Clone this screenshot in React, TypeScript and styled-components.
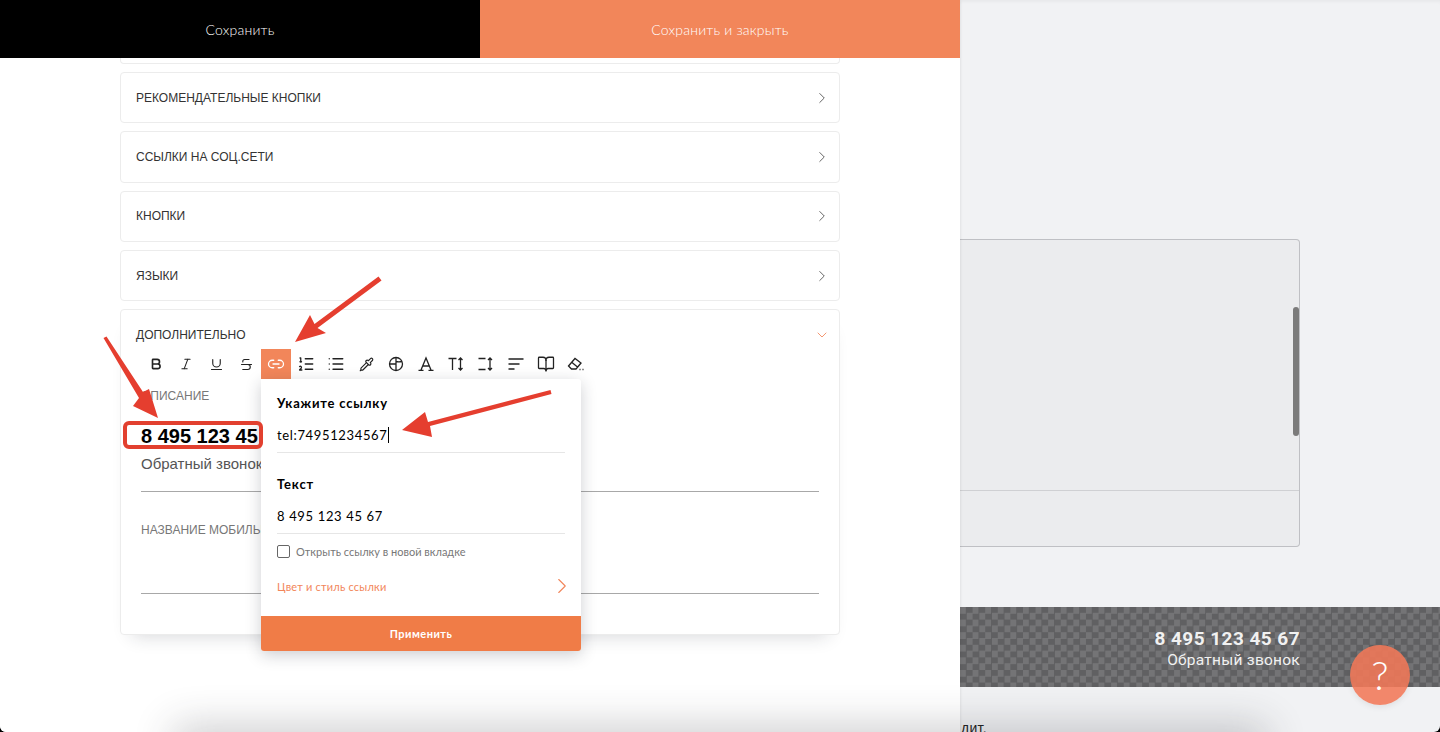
import React from "react"
import styled, { createGlobalStyle } from "styled-components"
import {
  Bold,
  BookOpen,
  ChevronDown,
  ChevronRight,
  Italic,
  Link2,
  List,
  ListOrdered,
  Pipette,
  Strikethrough,
  Underline,
} from "lucide-react"

const GlobalStyle = createGlobalStyle`
  html, body {
    margin: 0;
    padding: 0;
    background: #000;
  }
  * {
    box-sizing: border-box;
  }
`

const Page = styled.div`
  position: relative;
  display: flex;
  width: 1440px;
  height: 732px;
  overflow: hidden;
  background: #f1f2f4;
  border-radius: 0 0 6px 6px;
  font-family: "Liberation Sans", Arial, sans-serif;
`

const Editor = styled.div`
  width: 960px;
  flex-shrink: 0;
  height: 100%;
  background: #fff;
  box-shadow: 0 0 3px rgba(0, 0, 0, 0.12);
  position: relative;
  z-index: 1;
`

const SaveBar = styled.div`
  display: flex;
  height: 58px;
`

const SaveButton = styled.button<{ $primary?: boolean }>`
  flex: 1;
  border: none;
  background: ${(props) => (props.$primary ? "#f2865a" : "#000")};
  color: #fff;
  font-family: "Lato", "Open Sans", sans-serif;
  font-size: 14px;
  font-weight: 300;
  letter-spacing: 0.2px;
`

const Sections = styled.div`
  display: flex;
  flex-direction: column;
  gap: 8px;
  padding: 0 120px;
`

const SectionStub = styled.div`
  height: 6px;
  border: 1px solid #ececec;
  border-top: none;
  border-radius: 0 0 4px 4px;
`

const SectionRow = styled.div`
  display: flex;
  align-items: center;
  justify-content: space-between;
  height: 51.3px;
  padding: 0 8px 0 15px;
  border: 1px solid #ececec;
  border-radius: 4px;
  color: #333;
  font-size: 12px;

  svg {
    color: #555;
  }
`

const OpenSection = styled.div`
  position: relative;
  height: 326px;
  border: 1px solid #ececec;
  border-radius: 4px;
  background: #fff;
  box-shadow: 0 12px 18px -12px rgba(30, 35, 50, 0.2);
`

const OpenHeader = styled.div`
  display: flex;
  align-items: center;
  justify-content: space-between;
  height: 39px;
  padding: 10px 9px 0 15px;
  color: #333;
  font-size: 12px;

  svg {
    color: #f2865a;
  }
`

const Toolbar = styled.div`
  display: flex;
  margin-left: 20px;
  height: 30px;
`

const ToolButton = styled.div<{ $active?: boolean }>`
  position: relative;
  display: flex;
  align-items: center;
  justify-content: center;
  width: 30px;
  height: 30px;
  background: ${(props) => (props.$active ? "#f2865a" : "transparent")};
  color: ${(props) => (props.$active ? "#fff" : "#222")};
`

const Form = styled.div`
  display: flex;
  flex-direction: column;
  margin: 0 20px;
`

const FieldLabel = styled.div<{ $second?: boolean }>`
  margin-top: ${(props) => (props.$second ? "31px" : "10px")};
  line-height: 15px;
  font-size: 12px;
  color: #777;
  white-space: nowrap;
`

const DescriptionValue = styled.div`
  padding-bottom: 15px;
  margin-top: 20px;
  border-bottom: 1px solid #a8a8a8;
`

const PhoneLine = styled.div`
  position: relative;
  line-height: 24px;
  font-size: 20px;
  font-weight: 700;
  color: #000;
`

const CalloutBox = styled.span`
  position: absolute;
  left: -18px;
  top: -3px;
  width: 140px;
  height: 28px;
  border: 4px solid #e2402f;
  border-radius: 6px;
  z-index: 4;
`

const SubLine = styled.div`
  margin-top: 4px;
  line-height: 24px;
  font-size: 15px;
  color: #555;
`

const EmptyValue = styled.div`
  height: 56px;
  border-bottom: 1px solid #a8a8a8;
`

const Popover = styled.div`
  position: absolute;
  top: 30px;
  left: 0;
  z-index: 3;
  width: 320px;
  height: 272px;
  display: flex;
  flex-direction: column;
  background: #fff;
  border-radius: 0 3px 3px 3px;
  overflow: hidden;
  color: #000;
  font-family: "Lato", "Open Sans", sans-serif;
  box-shadow: 0 4px 16px rgba(30, 35, 50, 0.22);
`

const PopoverBody = styled.div`
  flex: 1;
  padding: 16px 16px 0;
`

const PopoverTitle = styled.div<{ $spaced?: boolean }>`
  margin-top: ${(props) => (props.$spaced ? "23px" : "0")};
  line-height: 17px;
  font-size: 13px;
  font-weight: 700;
  letter-spacing: 0.8px;
`

const PopoverInput = styled.div`
  display: flex;
  align-items: center;
  height: 41px;
  padding-top: 6px;
  border-bottom: 1px solid #e6e6e6;
  font-size: 13px;
  letter-spacing: 0.65px;
`

const Caret = styled.span`
  display: inline-block;
  width: 1px;
  height: 16px;
  background: #000;
`

const CheckRow = styled.label`
  display: flex;
  align-items: center;
  gap: 6px;
  margin-top: 11px;
  font-size: 11px;
  color: #777;
`

const CheckBox = styled.span`
  width: 13px;
  height: 13px;
  border: 1px solid #666;
  border-radius: 2px;
`

const StyleLink = styled.div`
  display: flex;
  align-items: center;
  justify-content: space-between;
  height: 16px;
  margin-top: 20px;
  font-size: 11px;
  letter-spacing: 0.2px;
  color: #f2865a;

  svg {
    margin-right: -10px;
  }
`

const ApplyButton = styled.button`
  height: 35px;
  border: none;
  background: #f07c47;
  color: #fff;
  font-family: inherit;
  font-size: 11px;
  font-weight: 700;
  letter-spacing: 0.5px;
`

const Preview = styled.div`
  flex: 1;
  padding-top: 239px;
  box-shadow: inset 0 4px 4px -3px rgba(0, 0, 0, 0.06);
`

const ScreenBox = styled.div`
  position: relative;
  height: 308px;
  margin-right: 140px;
  padding-bottom: 55px;
  background: #ebecee;
  border: 1px solid #bfc0c4;
  border-left: none;
  border-radius: 0 4px 4px 0;
`

const ScreenDivider = styled.div`
  height: 100%;
  border-bottom: 1px solid #cfd0d3;
`

const ScrollThumb = styled.div`
  position: absolute;
  top: 67px;
  right: 0;
  width: 6px;
  height: 129px;
  border-radius: 3px;
  background: #7b7b7b;
`

const CheckerBar = styled.div`
  display: flex;
  flex-direction: column;
  align-items: flex-end;
  justify-content: center;
  height: 80px;
  margin-top: 60px;
  padding: 4px 140px 0 0;
  background: repeating-conic-gradient(#606062 0 25%, #747476 0 50%) 0 0 / 12.6px 12.6px;
  color: #f1f1f1;
  font-family: "Roboto", sans-serif;
`

const BarPhone = styled.div`
  font-size: 19px;
  font-weight: 700;
  line-height: 22px;
  letter-spacing: 0.45px;
`

const BarSub = styled.div`
  font-size: 15.5px;
  line-height: 20px;
  letter-spacing: 0.25px;
`

const CutText = styled.div`
  margin-top: 33px;
  padding-left: 1px;
  font-size: 14px;
  line-height: 16px;
  letter-spacing: 0.3px;
  color: #222;
`

const FooterShadow = styled.div`
  position: absolute;
  left: 180px;
  right: 180px;
  bottom: -30px;
  height: 30px;
  z-index: 2;
  box-shadow: 0 0 40px 6px rgba(40, 42, 50, 0.24);
`

const HelpButton = styled.button`
  position: absolute;
  right: 30px;
  bottom: 27px;
  z-index: 5;
  width: 60px;
  height: 60px;
  border: none;
  border-radius: 50%;
  background: rgba(241, 120, 88, 0.88);
  color: #fff;
  font-family: "Lato", "Open Sans", sans-serif;
  font-size: 40px;
  font-weight: 300;
  box-shadow: 0 2px 6px rgba(0, 0, 0, 0.08);
`

const Arrows = styled.svg`
  position: absolute;
  inset: 0;
  z-index: 6;
  pointer-events: none;
`

const ToolIcon = ({ children }: { children: React.ReactNode }) => (
  <svg width="18" height="18" viewBox="0 0 18 18" fill="none" stroke="currentColor" strokeWidth="1.3">
    {children}
  </svg>
)

const sections = ["РЕКОМЕНДАТЕЛЬНЫЕ КНОПКИ", "ССЫЛКИ НА СОЦ.СЕТИ", "КНОПКИ", "ЯЗЫКИ"]

export default function App() {
  return (
    <Page>
      <GlobalStyle />
      <Editor>
        <SaveBar>
          <SaveButton>Сохранить</SaveButton>
          <SaveButton $primary>Сохранить и закрыть</SaveButton>
        </SaveBar>
        <Sections>
          <SectionStub />
          {sections.map((title) => (
            <SectionRow key={title}>
              <span>{title}</span>
              <ChevronRight size={18} strokeWidth={1.2} />
            </SectionRow>
          ))}
          <OpenSection>
            <OpenHeader>
              <span>ДОПОЛНИТЕЛЬНО</span>
              <ChevronDown size={16} strokeWidth={1.3} />
            </OpenHeader>
            <Toolbar>
              <ToolButton>
                <Bold size={14} strokeWidth={2.8} />
              </ToolButton>
              <ToolButton>
                <Italic size={14} strokeWidth={1.8} />
              </ToolButton>
              <ToolButton>
                <Underline size={15} strokeWidth={1.8} />
              </ToolButton>
              <ToolButton>
                <Strikethrough size={15} strokeWidth={1.8} />
              </ToolButton>
              <ToolButton $active>
                <Link2 size={18} strokeWidth={1.7} />
                <Popover>
                  <PopoverBody>
                    <PopoverTitle>Укажите ссылку</PopoverTitle>
                    <PopoverInput>
                      tel:74951234567
                      <Caret />
                    </PopoverInput>
                    <PopoverTitle $spaced>Текст</PopoverTitle>
                    <PopoverInput>8 495 123 45 67</PopoverInput>
                    <CheckRow>
                      <CheckBox />
                      Открыть ссылку в новой вкладке
                    </CheckRow>
                    <StyleLink>
                      Цвет и стиль ссылки
                      <ChevronRight size={26} strokeWidth={1} />
                    </StyleLink>
                  </PopoverBody>
                  <ApplyButton>Применить</ApplyButton>
                </Popover>
              </ToolButton>
              <ToolButton>
                <ListOrdered size={18} strokeWidth={1.7} />
              </ToolButton>
              <ToolButton>
                <List size={18} strokeWidth={1.8} />
              </ToolButton>
              <ToolButton>
                <Pipette size={15} strokeWidth={1.8} />
              </ToolButton>
              <ToolButton>
                <ToolIcon>
                  <circle cx="9" cy="9" r="6.5" />
                  <path d="M9 2.5v13M2.5 9H9M9 6.5c2 .5 3.5.5 6 0" />
                </ToolIcon>
              </ToolButton>
              <ToolButton>
                <ToolIcon>
                  <path d="M4 15 9 3l5 12M6 11h6M1.5 15.3h5M11.5 15.3h5" />
                </ToolIcon>
              </ToolButton>
              <ToolButton>
                <ToolIcon>
                  <path d="M1.5 3.5h8M5.5 3.5V15M13.5 3v12M11.5 5l2-2 2 2M11.5 13l2 2 2-2" />
                </ToolIcon>
              </ToolButton>
              <ToolButton>
                <ToolIcon>
                  <path d="M1.5 3.5h7M1.5 14.5h7M13 3v12M11 5l2-2 2 2M11 13l2 2 2-2" />
                </ToolIcon>
              </ToolButton>
              <ToolButton>
                <ToolIcon>
                  <path d="M1.5 4h15M1.5 9h11M1.5 14h6" />
                </ToolIcon>
              </ToolButton>
              <ToolButton>
                <BookOpen size={18} strokeWidth={1.7} />
              </ToolButton>
              <ToolButton>
                <ToolIcon>
                  <path d="M1.5 11 8 3.5l6 4.5-5 6H4.5zM5 7.5l5.5 4.5" />
                  <path d="M12.5 14.5h1M15.5 14.5h1" />
                </ToolIcon>
              </ToolButton>
            </Toolbar>
            <Form>
              <FieldLabel>ОПИСАНИЕ</FieldLabel>
              <DescriptionValue>
                <PhoneLine>
                  8 495 123 45 67
                  <CalloutBox />
                </PhoneLine>
                <SubLine>Обратный звонок</SubLine>
              </DescriptionValue>
              <FieldLabel $second>НАЗВАНИЕ МОБИЛЬНОГО МЕНЮ</FieldLabel>
              <EmptyValue />
            </Form>
          </OpenSection>
        </Sections>
      </Editor>
      <Preview>
        <ScreenBox>
          <ScreenDivider />
          <ScrollThumb />
        </ScreenBox>
        <CheckerBar>
          <BarPhone>8 495 123 45 67</BarPhone>
          <BarSub>Обратный звонок</BarSub>
        </CheckerBar>
        <CutText>дит.</CutText>
      </Preview>
      <FooterShadow />
      <HelpButton>?</HelpButton>
      <Arrows width="1440" height="732" viewBox="0 0 1440 732" fill="#e53e2f">
        <polygon points="378.5,276.5 381.5,280.5 317.5,328 326,333 295,342 310,315 314.5,324" />
        <polygon points="103.5,338 106.5,336.5 143,392 149,389 158,418 133,406 139,398" />
        <polygon points="550.5,390 551.5,394 430,426 432,437 402,430 425,412 428,422" />
      </Arrows>
    </Page>
  )
}
